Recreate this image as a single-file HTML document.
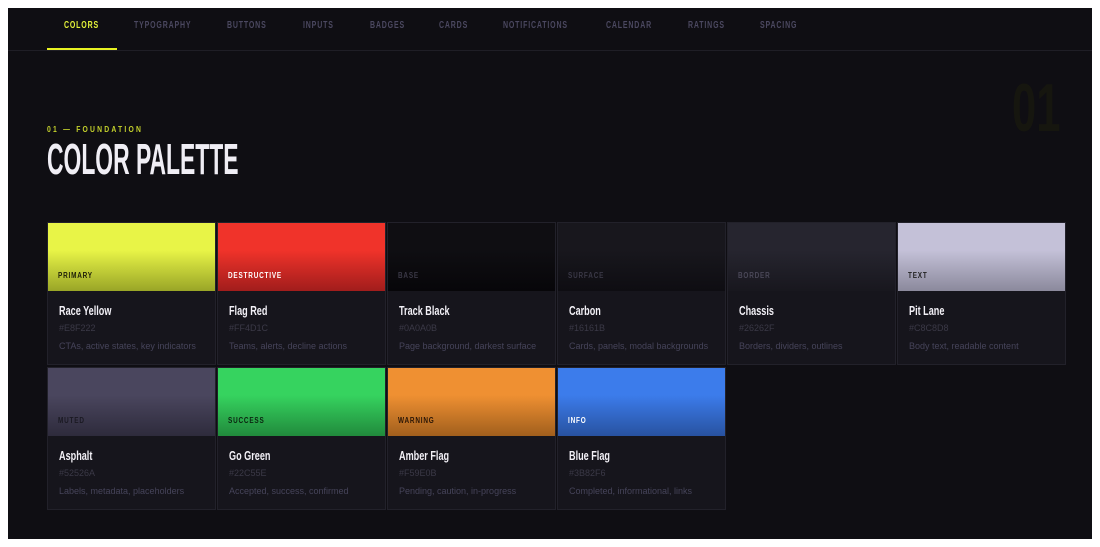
<!DOCTYPE html>
<html><head><meta charset="utf-8"><style>
*{margin:0;padding:0;box-sizing:border-box}
body{width:1100px;height:547px;background:#fff;position:relative;overflow:hidden;font-family:"Liberation Sans",sans-serif}
.frame{position:absolute;left:8px;top:8px;width:1084px;height:531px;background:#0f0e13;overflow:hidden}
.nav{position:absolute;left:0;top:0;width:100%;height:43px;border-bottom:1px solid #1f1e26}
.nav span{position:absolute;top:12px;font-weight:bold;font-size:10px;letter-spacing:1.2px;color:#4b4860;transform:scaleX(.7);transform-origin:left top;white-space:nowrap}
.nav .act{color:#e4f23a}
.ul{position:absolute;left:39px;top:40px;width:70px;height:2px;background:#e8f222}
.big{position:absolute;left:1004px;top:66px;font-weight:bold;font-size:68px;color:#16160f;line-height:1;transform:scaleX(.64);transform-origin:left top}
.kick{position:absolute;left:39px;top:117px;font-size:8px;font-weight:bold;letter-spacing:2.6px;color:#c5d22c;transform:scaleX(.85);transform-origin:left top;white-space:nowrap}
.title{position:absolute;left:39px;top:128px;font-weight:bold;font-size:44px;color:#f0eef5;transform:scaleX(.52);transform-origin:left top;line-height:1.1;white-space:nowrap}
.card{position:absolute;width:169px;height:143px;background:#16151c;border:1px solid #22212a}
.sw{height:68px;position:relative}
.sw b{position:absolute;left:10px;bottom:11px;font-size:8px;letter-spacing:1px;transform:scaleX(.8);transform-origin:left top;white-space:nowrap}
.nm{position:absolute;left:11px;top:80px;font-weight:bold;font-size:13px;color:#f2f0f6;transform:scaleX(.7);transform-origin:left top;white-space:nowrap}
.hx{position:absolute;left:11px;top:100px;font-size:9px;color:#3b3947}
.ds{position:absolute;left:11px;top:118px;font-size:9px;color:#46445a;white-space:nowrap}
</style></head><body><div class="frame">
<div class="nav">
<span class="act" style="left:56px">COLORS</span>
<span style="left:126px">TYPOGRAPHY</span>
<span style="left:219px">BUTTONS</span>
<span style="left:295px">INPUTS</span>
<span style="left:362px">BADGES</span>
<span style="left:431px">CARDS</span>
<span style="left:495px">NOTIFICATIONS</span>
<span style="left:598px">CALENDAR</span>
<span style="left:680px">RATINGS</span>
<span style="left:752px">SPACING</span>
</div>
<div class="ul"></div>
<div class="big">01</div>
<div class="kick">01 — FOUNDATION</div>
<div class="title">COLOR PALETTE</div>

<div class="card" style="left:39px;top:214px"><div class="sw" style="background:linear-gradient(#e8f447 40%,#99a527)"><b style="color:#1c1d08">PRIMARY</b></div><div class="nm">Race Yellow</div><div class="hx">#E8F222</div><div class="ds">CTAs, active states, key indicators</div></div>
<div class="card" style="left:209px;top:214px"><div class="sw" style="background:linear-gradient(#f0332a 40%,#a11d1c)"><b style="color:#fff">DESTRUCTIVE</b></div><div class="nm">Flag Red</div><div class="hx">#FF4D1C</div><div class="ds">Teams, alerts, decline actions</div></div>
<div class="card" style="left:379px;top:214px"><div class="sw" style="background:linear-gradient(#0f0e12 40%,#070609)"><b style="color:#3a3846">BASE</b></div><div class="nm">Track Black</div><div class="hx">#0A0A0B</div><div class="ds">Page background, darkest surface</div></div>
<div class="card" style="left:549px;top:214px"><div class="sw" style="background:linear-gradient(#18171d 40%,#0e0d12)"><b style="color:#3a3846">SURFACE</b></div><div class="nm">Carbon</div><div class="hx">#16161B</div><div class="ds">Cards, panels, modal backgrounds</div></div>
<div class="card" style="left:719px;top:214px"><div class="sw" style="background:linear-gradient(#26252f 40%,#18171e)"><b style="color:#4a4858">BORDER</b></div><div class="nm">Chassis</div><div class="hx">#26262F</div><div class="ds">Borders, dividers, outlines</div></div>
<div class="card" style="left:889px;top:214px"><div class="sw" style="background:linear-gradient(#c4c1d8 40%,#8b899c)"><b style="color:#222">TEXT</b></div><div class="nm">Pit Lane</div><div class="hx">#C8C8D8</div><div class="ds">Body text, readable content</div></div>

<div class="card" style="left:39px;top:359px"><div class="sw" style="background:linear-gradient(#4a465e 40%,#2e2b3c)"><b style="color:#1a1922">MUTED</b></div><div class="nm">Asphalt</div><div class="hx">#52526A</div><div class="ds">Labels, metadata, placeholders</div></div>
<div class="card" style="left:209px;top:359px"><div class="sw" style="background:linear-gradient(#36d35f 40%,#218a3c)"><b style="color:#0b2410">SUCCESS</b></div><div class="nm">Go Green</div><div class="hx">#22C55E</div><div class="ds">Accepted, success, confirmed</div></div>
<div class="card" style="left:379px;top:359px"><div class="sw" style="background:linear-gradient(#ef9032 40%,#a15f1d)"><b style="color:#2a1606">WARNING</b></div><div class="nm">Amber Flag</div><div class="hx">#F59E0B</div><div class="ds">Pending, caution, in-progress</div></div>
<div class="card" style="left:549px;top:359px"><div class="sw" style="background:linear-gradient(#3c7ceb 40%,#2852a0)"><b style="color:#fff">INFO</b></div><div class="nm">Blue Flag</div><div class="hx">#3B82F6</div><div class="ds">Completed, informational, links</div></div>
</div></body></html>
